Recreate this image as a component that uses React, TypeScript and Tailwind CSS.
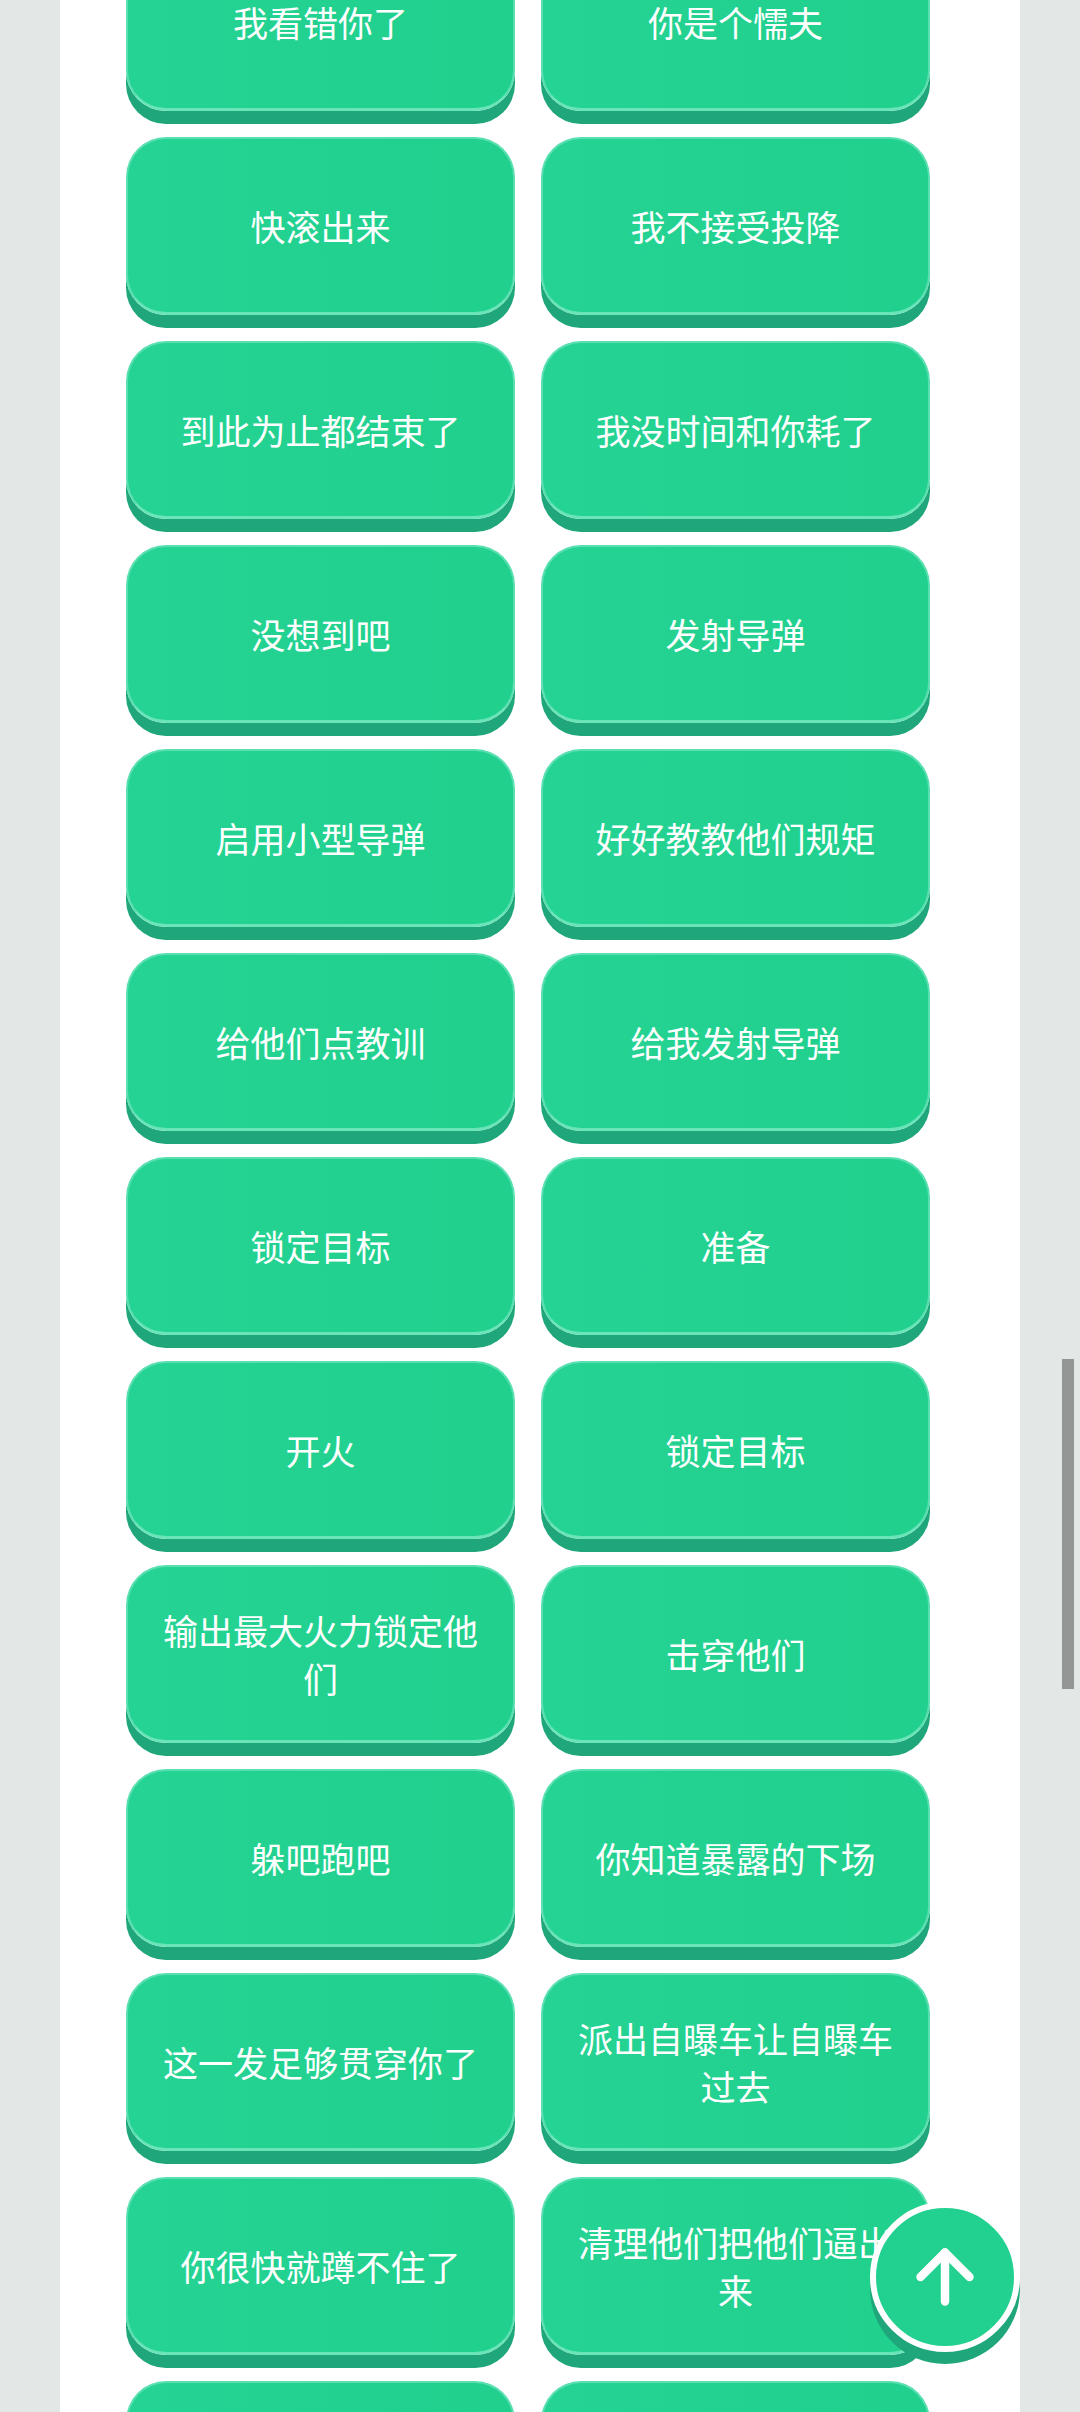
import { ArrowUp } from 'lucide-react'

const rows: [string, string][] = [
  ['我看错你了', '你是个懦夫'],
  ['快滚出来', '我不接受投降'],
  ['到此为止都结束了', '我没时间和你耗了'],
  ['没想到吧', '发射导弹'],
  ['启用小型导弹', '好好教教他们规矩'],
  ['给他们点教训', '给我发射导弹'],
  ['锁定目标', '准备'],
  ['开火', '锁定目标'],
  ['输出最大火力锁定他们', '击穿他们'],
  ['躲吧跑吧', '你知道暴露的下场'],
  ['这一发足够贯穿你了', '派出自曝车让自曝车过去'],
  ['你很快就蹲不住了', '清理他们把他们逼出来'],
  ['你们跑不掉了', '全部消灭'],
]

function SoundButton({ label }: { label: string }) {
  return (
    <button className="flex h-[178px] items-center justify-center rounded-[40px] border-2 border-[#5adfb1] border-b-[3px] border-b-[#6ae4b9] bg-gradient-to-r from-[#25d394] to-[#20d08c] px-6 text-center text-[35px] leading-[48px] text-white shadow-[0_13px_0_#1fa77b]">
      {label}
    </button>
  )
}

export default function App() {
  return (
    <div
      className="relative h-[2412px] overflow-hidden bg-[#e3e8e6]"
      style={{ fontFamily: '"Noto Sans CJK SC", "Noto Sans", sans-serif' }}
    >
      <div className="mx-[60px] flow-root h-full bg-white">
        <div className="-mt-[67px] ml-[66px] grid grid-cols-[389px_389px] gap-[26px]">
          {rows.flat().map((label, i) => (
            <SoundButton key={i} label={label} />
          ))}
        </div>
      </div>

      {/* overlay scrollbar */}
      <div className="absolute left-[1062px] top-[1359px] h-[330px] w-[12px] bg-[#939695]" />

      <button className="absolute bottom-[60px] right-[60px] flex h-[150px] w-[150px] items-center justify-center rounded-full border-[6px] border-white bg-[#22d08f] text-white shadow-[0_12px_0_#1fa77b]">
        <ArrowUp size={84} strokeWidth={2.4} />
      </button>
    </div>
  )
}
